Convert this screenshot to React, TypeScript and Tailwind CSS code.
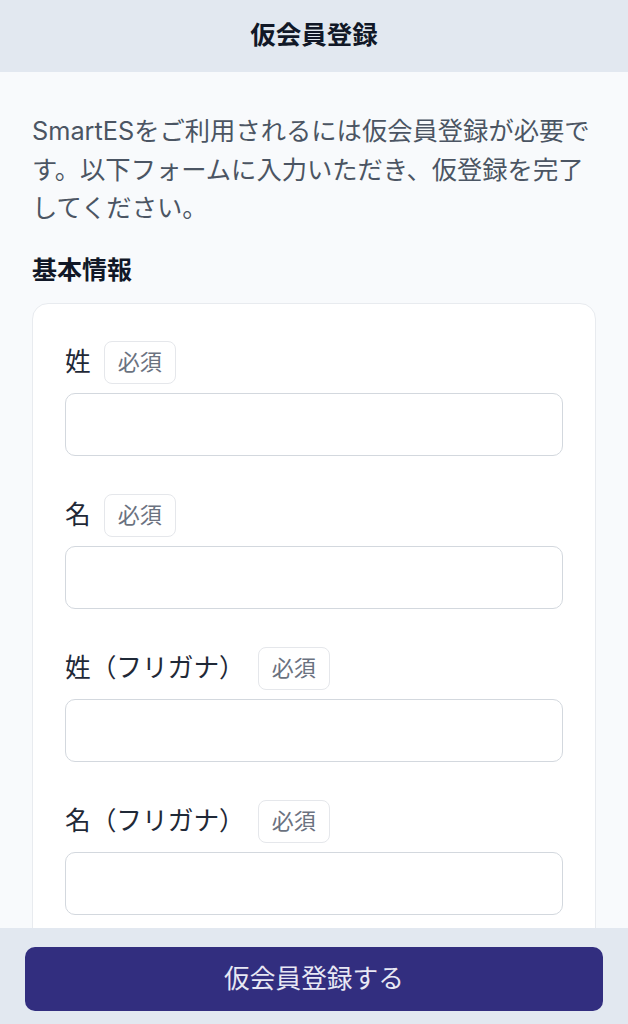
const FIELDS = ["姓", "名", "姓（フリガナ）", "名（フリガナ）"];

function Field({ label }: { label: string }) {
  return (
    <div>
      <div className="flex items-center gap-[13px]">
        <span className="text-[25.7px] leading-[38px] text-[#1f2937]">{label}</span>
        <span className="h-[43px] px-[13px] flex items-center rounded-[8px] border-[1.5px] border-[#e5e7eb] text-[22px] text-[#6b7280]">
          必須
        </span>
      </div>
      <input
        type="text"
        className="mt-[9px] block w-full h-[63px] rounded-[10px] border-[1.6px] border-[#d3d8de] bg-white px-4 text-[25px] outline-none"
      />
    </div>
  );
}

export default function App() {
  return (
    <div
      className="min-h-screen bg-[#f8fafc] pb-[120px]"
      style={{ fontFamily: 'Inter, "Noto Sans CJK JP", sans-serif' }}
    >
      <header className="h-[72px] bg-[#e2e8f0] flex items-center justify-center">
        <h1 className="text-[25.5px] font-semibold text-[#111827] -mt-[2px]">仮会員登録</h1>
      </header>

      <main className="px-[32px] pt-[40px]">
        <p className="text-[25.3px] leading-[38.5px] text-[#4b5563]">
          SmartESをご利用されるには仮会員登録が必要です。以下フォームに入力いただき、仮登録を完了してください。
        </p>

        <h2 className="mt-[23px] text-[25px] leading-[38px] font-bold text-[#111827]">基本情報</h2>

        <div className="mt-[14px] rounded-[16px] border-[1.6px] border-[#e8ebef] bg-white px-[32px] pt-[37px] pb-[38px] flex flex-col gap-[38px]">
          {FIELDS.map((f) => (
            <Field key={f} label={f} />
          ))}
        </div>
      </main>

      <div className="fixed bottom-0 left-0 right-0 bg-[#e2e8f0] px-[25px] pt-[19px] pb-[13px]">
        <button className="w-full h-[64px] rounded-[10px] bg-[#322e7f] text-[25.7px] text-[#e8e8f4]">
          仮会員登録する
        </button>
      </div>
    </div>
  );
}
